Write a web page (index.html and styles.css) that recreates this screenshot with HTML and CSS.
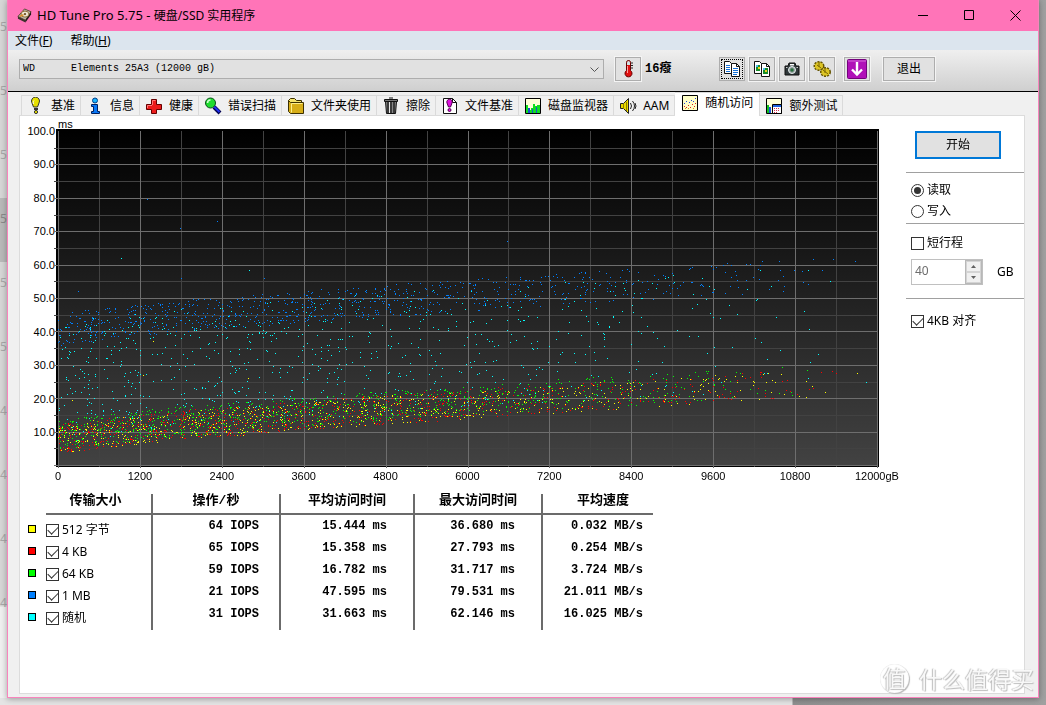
FILE: index.html
```html
<!DOCTYPE html>
<html lang="zh-CN">
<head>
<meta charset="utf-8">
<title>HD Tune Pro 5.75 - 硬盘/SSD 实用程序</title>
<link rel="stylesheet" href="styles.css">
</head>
<body>
<div class="desktop">
  <div class="rail" aria-hidden="true">
    <span>5</span><span>5</span><span>5</span><span class="rail-on">5</span><span>5</span><span>5</span><span>4</span><span>4</span><span>4</span><span>4</span>
  </div>
  <div class="window">
    <header class="titlebar">
      <svg class="app-icon" viewBox="0 0 16 16"><path d="M1 9 8 1l7 3-6 9z" fill="#b9b4a6" stroke="#5a4632"/><path d="M1 9l8 4v2.500L1 11.500z" fill="#3c332b"/><path d="m9 13 6-9v3l-6 8.500z" fill="#1e1a18"/><ellipse cx="8.500" cy="6.500" rx="4.200" ry="3.200" fill="#ece5d2" stroke="#8c6a32"/><circle cx="8.500" cy="6.500" r="1.200" fill="#6b4a20"/><path d="m3 9 4-2" stroke="#d98a20" stroke-width="1.500"/></svg>
      <h1><span class="product">HD Tune Pro 5.75 - </span>硬盘/SSD 实用程序</h1>
      <button class="win-btn" aria-label="最小化"><svg viewBox="0 0 11 11"><path d="M0 5.500h10" stroke="#000"/></svg></button>
      <button class="win-btn" aria-label="最大化"><svg viewBox="0 0 11 11"><path d="M.5.5h9v9h-9z" fill="none" stroke="#000"/></svg></button>
      <button class="win-btn" aria-label="关闭"><svg viewBox="0 0 11 11"><path d="m.5.5 10 10m0-10-10 10" stroke="#000"/></svg></button>
    </header>
    <nav class="menubar">
      <button>文件(<u>F</u>)</button>
      <button>帮助(<u>H</u>)</button>
    </nav>
    <div class="toolbar">
      <div class="drive">
        <select aria-label="驱动器"><option>WD&nbsp;&nbsp;&nbsp;&nbsp;&nbsp;&nbsp;Elements 25A3 (12000 gB)</option></select>
        <svg viewBox="0 0 9 5"><path d="m.5.5 4 4 4-4" fill="none" stroke="#555"/></svg>
      </div>
      <button class="tool temp" aria-label="温度"><svg viewBox="0 0 18 18"><path d="M7.500 2.500a2 2 0 0 1 4 0v8a3.500 3.500 0 1 1-4 0z" fill="#e01010" stroke="#600"/><path d="M8 2.500a1.500 1.500 0 0 1 3 0V5H8z" fill="#cfe3e6"/><path d="M12 3h2M12 5.500h2M12 8h2" stroke="#222"/><path d="M8.500 6v7" stroke="#ff9c9c"/></svg></button>
      <strong class="degrees">16癈</strong>
      <div class="tools">
        <button class="tool focused" aria-label="复制文本"><svg viewBox="0 0 18 18"><path d="M1.500 1.500h5l2 2v10h-7z" fill="#fff" stroke="#111"/><path d="M8.500 3.500h5l3 3v10h-8z" fill="#fff" stroke="#111"/><path d="M13.500 3.500v3h3" fill="none" stroke="#111"/><path d="M3 5.500h4M3 7.500h4M3 9.500h4M3 11.500h4M10 8.500h5M10 10.500h5M10 12.500h5M10 14.500h4" stroke="#1672d8"/></svg></button>
        <button class="tool" aria-label="复制图像"><svg viewBox="0 0 18 18"><path d="M1.500 1.500h5l2 2v10h-7z" fill="#fff" stroke="#111"/><path d="M8.500 3.500h5l3 3v10h-8z" fill="#fff" stroke="#111"/><path d="M13.500 3.500v3h3" fill="none" stroke="#111"/><path d="M3 5h4v6H3z" fill="#168c28"/><path d="M10 8h5v6h-5z" fill="#168c28"/><path d="M3 5h2v2H3zM10 8h2v2h-2z" fill="#48b8f0"/><path d="M5 7h2v2H5zM12 10h2v2h-2z" fill="#f0d020"/></svg></button>
        <button class="tool" aria-label="截图"><svg viewBox="0 0 18 18"><path d="M2 6h3l1-3h6l1 3h3v9H2z" fill="#30383a" stroke="#111"/><path d="M7 4h4v1.500H7z" fill="#fff"/><circle cx="9" cy="10" r="3.500" fill="#8f9c9c" stroke="#e8eeee"/><circle cx="9" cy="10" r="1.700" fill="#28713c"/><path d="M3 7.500h1.500M13.500 7.500H15" stroke="#ccc"/></svg></button>
        <button class="tool" aria-label="选项"><svg viewBox="0 0 18 18"><ellipse cx="6" cy="6" rx="4.500" ry="4" fill="#d8bc18" stroke="#665500" stroke-width="2" stroke-dasharray="2 1"/><ellipse cx="6" cy="6" rx="4" ry="3.600" fill="#dcc424"/><ellipse cx="12.500" cy="12" rx="4.500" ry="4" fill="#d8bc18" stroke="#665500" stroke-width="2" stroke-dasharray="2 1"/><ellipse cx="12.500" cy="12" rx="4" ry="3.600" fill="#dcc424"/><path d="m4 5 4 3M10 10l5 4M6 2v5M12 8v5" stroke="#7c6804"/></svg></button>
        <button class="tool save" aria-label="保存"><svg viewBox="0 0 20 20"><rect x=".5" y=".5" width="19" height="19" rx="1" fill="#b010b8" stroke="#74007c"/><path d="M1 2h18" stroke="#d76bdc"/><path d="M10 3v12M5 10.500l5 5 5-5" fill="none" stroke="#fff" stroke-width="2.400"/></svg></button>
      </div>
      <button class="exit">退出</button>
    </div>
    <main class="body">
      <nav class="tabs" role="tablist">
        <button role="tab"><svg viewBox="0 0 18 18"><path d="M6.500 10 5 6a4 4 0 1 1 7 0l-1.500 4z" fill="#e6e000" stroke="#333"/><path d="M7 11h4v2H7z" fill="#333"/><circle cx="9" cy="15" r="1.600" fill="#e6e000" stroke="#333"/><path d="M7 3.500c-1 1-1 2-.5 3.500" fill="none" stroke="#fff"/></svg>基准</button>
        <button role="tab"><svg viewBox="0 0 18 18"><circle cx="9" cy="3.500" r="2.500" fill="#19b4ff" stroke="#003c88"/><path d="M5.500 7.500h6v7h2v2h-8v-2h2v-5h-2z" fill="#0878f8" stroke="#002060"/></svg>信息</button>
        <button role="tab"><svg viewBox="0 0 18 18"><path d="M6.500 2.500h5v5h5v5h-5v4h-5v-4h-5v-5h5z" fill="#ec1c1c" stroke="#650000"/><path d="M7.500 8V3.500h3M2.500 11V8.500H7" fill="none" stroke="#ff7a7a"/></svg>健康</button>
        <button role="tab"><svg viewBox="0 0 18 18"><path d="m10 10 6 6" stroke="#000050" stroke-width="4"/><path d="m10 9.500 5.500 5.500" stroke="#2030f0" stroke-width="2"/><circle cx="6.500" cy="6" r="5" fill="#20dc30" stroke="#084c18"/><path d="M3.500 6a3 3 0 0 1 3-3" fill="none" stroke="#d0ffd0" stroke-width="1.500"/></svg>错误扫描</button>
        <button role="tab"><svg viewBox="0 0 18 18"><path d="M1.500 14V3.500l2-2h4l2 2h5V6" fill="#f4e46c" stroke="#3c3000"/><path d="M3.500 5.500h13v11h-13l-2-2v-11z" fill="#d7ae18" stroke="#3c3000"/><path d="M4.500 15.500v-9h11" fill="none" stroke="#fff08c"/></svg>文件夹使用</button>
        <button role="tab"><svg viewBox="0 0 18 18"><path d="M3.500 4.500h11l-1 12h-9z" fill="#888" stroke="#111"/><path d="M6 5v11M9 5v11M12 5v11" stroke="#222" stroke-width="1.500"/><path d="M7.500 5v11" stroke="#e8e8e8"/><path d="M2.500 2.500h13v2h-13zM7 1h4" fill="#777" stroke="#111"/></svg>擦除</button>
        <button role="tab"><svg viewBox="0 0 18 18"><path d="M2.500 1.500h9l4 4v11h-13z" fill="#fff" stroke="#111"/><path d="M11.500 1.500v4h4" fill="none" stroke="#111"/><path d="M7.500 10 6 6a2.700 2.700 0 1 1 5 0l-1.500 4z" fill="#e010e0" stroke="#500050"/><circle cx="8.500" cy="13" r="1.500" fill="#e010e0" stroke="#500050"/></svg>文件基准</button>
        <button role="tab"><svg viewBox="0 0 18 18"><path d="M1.500 1.500h15v15h-15z" fill="#ffffd8" stroke="#000"/><path d="M2 8h2v8H2zM7 11h2V7h2v2h2v7H4v-3h3z" fill="#10e020"/><path d="M13 8h3v8h-3z" fill="#10e020"/><path d="M4 11h2v5H4zM8 12h1v4H8zM12 10h1v6h-1z" fill="#1850d0"/></svg>磁盘监视器</button>
        <button role="tab"><svg viewBox="0 0 18 18"><path d="M1.500 6.500h3l5-5v15l-5-5h-3z" fill="#e8d800" stroke="#222"/><path d="M4.500 7v5M7.500 5v9" stroke="#8a7e00"/><path d="M11.500 6q2 3 0 6M13.500 4q4 5 0 10M16 6q2 3 0 6" fill="none" stroke="#222"/></svg>AAM</button>
        <button role="tab" aria-selected="true" class="active"><svg viewBox="0 0 18 18"><path d="M1.500 1.500h15v15h-15z" fill="#ffffc8" stroke="#000"/><path d="M3 12h1v1H3zM5 13h1v1H5zM7 11h1v1H7zM9 13h1v1H9zM11 10h1v1h-1zM13 12h1v1h-1zM14 9h1v1h-1z" fill="#e02020"/><path d="M3 9h1v1H3zM5 7h1v1H5zM8 8h1v1H8zM10 6h1v1h-1zM12 7h1v1h-1zM14 4h1v1h-1z" fill="#2040e0"/><path d="M4 14h1v1H4zM7 14h1v1H7zM12 14h1v1h-1z" fill="#e09010"/></svg>随机访问</button>
        <button role="tab"><svg viewBox="0 0 18 18"><path d="M1.500 1.500h15v15h-15z" fill="#ffffd8" stroke="#000"/><path d="M2 8h2v8H2z" fill="#10c020"/><path d="M4 10h2v6H4z" fill="#1850e0"/><path d="M7.500 7.500h9v9h-9z" fill="#fff" stroke="#000"/><path d="M8 9h8" stroke="#2060e0" stroke-width="2"/><path d="M9 11.500h6M9 13.500h6M9 15.500h4" stroke="#d03050" stroke-dasharray="1 1"/></svg>额外测试</button>
      </nav>
      <section class="panel">
        <div class="results">
          <div class="unit">ms</div>
          <div class="chart">
            <div class="y-axis"><span>100.0</span><span>90.0</span><span>80.0</span><span>70.0</span><span>60.0</span><span>50.0</span><span>40.0</span><span>30.0</span><span>20.0</span><span>10.0</span></div>
            <div class="plot"><canvas id="plot" role="img" aria-label="随机访问时间"></canvas></div>
          </div>
          <div class="x-axis"><span>0</span><span>1200</span><span>2400</span><span>3600</span><span>4800</span><span>6000</span><span>7200</span><span>8400</span><span>9600</span><span>10800</span><span>12000gB</span></div>
          <table class="stats">
            <thead><tr><td class="key"></td><th>传输大小</th><th>操作/秒</th><th>平均访问时间</th><th>最大访问时间</th><th>平均速度</th></tr></thead>
            <tbody>
              <tr><td class="key"><i class="swatch yellow"></i></td><td><label><input type="checkbox" checked>512 字节</label></td><td>64 IOPS</td><td>15.444 ms</td><td>36.680 ms</td><td>0.032 MB/s</td></tr>
              <tr><td class="key"><i class="swatch red"></i></td><td><label><input type="checkbox" checked>4 KB</label></td><td>65 IOPS</td><td>15.358 ms</td><td>27.793 ms</td><td>0.254 MB/s</td></tr>
              <tr><td class="key"><i class="swatch green"></i></td><td><label><input type="checkbox" checked>64 KB</label></td><td>59 IOPS</td><td>16.782 ms</td><td>31.717 ms</td><td>3.724 MB/s</td></tr>
              <tr><td class="key"><i class="swatch blue"></i></td><td><label><input type="checkbox" checked>1 MB</label></td><td>21 IOPS</td><td>47.595 ms</td><td>79.531 ms</td><td>21.011 MB/s</td></tr>
              <tr><td class="key"><i class="swatch cyan"></i></td><td><label><input type="checkbox" checked>随机</label></td><td>31 IOPS</td><td>31.663 ms</td><td>62.146 ms</td><td>16.025 MB/s</td></tr>
            </tbody>
          </table>
        </div>
        <aside class="options">
          <div class="group"><button class="start">开始</button></div>
          <div class="group">
            <label><input type="radio" name="mode" checked>读取</label>
            <label><input type="radio" name="mode">写入</label>
          </div>
          <div class="group stroke">
            <label><input type="checkbox">短行程</label>
            <div class="size">
              <div class="spin">
                <input type="text" id="size" value="40" disabled>
                <div class="arrows">
                  <button disabled aria-label="增加"><svg viewBox="0 0 5 3"><path d="M0 3h5L2.500 0z" fill="#606060"/></svg></button>
                  <button disabled aria-label="减少"><svg viewBox="0 0 5 3"><path d="M0 0h5L2.500 3z" fill="#606060"/></svg></button>
                </div>
              </div>
              <label for="size">GB</label>
            </div>
          </div>
          <div class="group"><label><input type="checkbox" checked>4KB 对齐</label></div>
        </aside>
      </section>
    </main>
  </div>
  <div class="watermark"><span class="seal">值</span><span>什么值得买</span></div>
</div>
<script src="plot.js"></script>
</body>
</html>
```

FILE: styles.css
```css
* { box-sizing: border-box; }

body {
  margin: 0;
  font: 12px/16px "Noto Sans", "Noto Sans CJK SC", sans-serif;
  color: #000;
}

button, input, select { font: inherit; color: inherit; margin: 0; }
button { padding: 0; border: 0; background: none; }
svg { display: block; }

.desktop {
  position: relative;
  display: flex;
  min-height: 100vh;
  padding: 0 7px 7px 0;
  background:
    linear-gradient(90deg, #e4e4e4, #e4e4e4 792px, #909090 793px, #a0a0a0);
}

.rail {
  width: 7px;
  padding-top: 6px;
  overflow: hidden;
  color: #a8a8a8;
  background: linear-gradient(#d6d6d6 606px, #f0f0f0 607px);
}
.rail span { display: block; height: 64px; line-height: 42px; }
.rail .rail-on { background: #b9b9b9; color: #8a8a8a; }

.window {
  flex: 1;
  min-width: 0;
  display: flex;
  flex-direction: column;
  border: 1px solid #f884bc;
  border-top: 0;
  background: #f0f0f0;
  box-shadow: 0 1px 6px #00000055;
}

.titlebar { display: flex; align-items: center; height: 31px; padding-left: 9px; background: #ff74b8; }
.app-icon { width: 15px; height: 15px; }
.titlebar h1 { flex: 1; margin: 0 0 0 5px; font-size: 12px; font-weight: 400; white-space: pre; }
.titlebar .product { font-size: 13px; }
.win-btn { width: 46px; height: 31px; display: grid; place-items: center; }
.win-btn svg { width: 11px; height: 11px; }

.menubar { display: flex; gap: 18px; height: 19px; padding-left: 7px; background: #dce5ee; }

.toolbar {
  display: flex;
  align-items: center;
  height: 42px;
  padding: 0 103px 4px 11px;
  border-bottom: 1px solid #000;
  background: linear-gradient(#efefef, #cfcfcf);
}
.drive { flex: 1; position: relative; }
.drive select {
  display: block;
  width: 100%;
  height: 20px;
  padding: 0 3px;
  appearance: none;
  border: 1px solid #adadad;
  border-radius: 0;
  background: #e1e1e1;
  font: 10px "Liberation Mono", monospace;
}
.drive svg { position: absolute; right: 5px; top: 8px; width: 9px; height: 5px; pointer-events: none; }
.tool, .exit { border: 1px solid #adadad; background: #e1e1e1; outline: 1px solid #f4f4f4; }
.tool { width: 26px; height: 24px; display: grid; place-items: center; }
.tool svg { width: 18px; height: 18px; }
.temp { margin-left: 11px; }
.degrees { width: 78px; padding-left: 4px; font: bold 12px/16px "Liberation Mono", "Noto Sans CJK SC", monospace; }
.tools { display: flex; gap: 4px; }
.tool.focused { outline: 1px dotted #000; outline-offset: -3px; }
.save { margin-left: 5px; }
.save svg { width: 20px; height: 20px; }
.exit { width: 52px; height: 24px; margin-left: 13px; }

.body { flex: 1; display: flex; flex-direction: column; padding: 0 13px 3px 11px; }

.tabs { display: flex; align-items: flex-end; height: 23px; padding-left: 2px; }
.tabs button {
  display: flex;
  align-items: center;
  gap: 6px;
  height: 20px;
  padding: 0 5px;
  border: solid #dadada;
  border-width: 1px 1px 0 0;
  white-space: nowrap;
}
.tabs button:first-child { border-left-width: 1px; }
.tabs svg { width: 18px; height: 18px; }
.tabs .active {
  position: relative;
  height: 24px;
  margin-bottom: -1px;
  padding: 0 6px 4px;
  background: #fff;
}

.panel { flex: 1; display: flex; gap: 27px; border: 1px solid #dcdcdc; background: #fff; }
.results { flex: 1; min-width: 0; }

.unit, .y-axis, .x-axis { font: 11px/12px "Liberation Sans", Arial, sans-serif; }
.unit { height: 13px; padding: 2px 0 0 38px; }
.chart { display: flex; height: 341px; }
.y-axis {
  width: 35px;
  display: flex;
  flex-direction: column;
  justify-content: space-between;
  height: 313px;
  margin: -4px -1px 0 0;
  text-align: right;
}
.plot { flex: 1; min-width: 0; overflow: hidden; }
.plot canvas { display: block; width: 100%; height: 100%; }
.x-axis { display: flex; justify-content: space-between; padding: 0 2px 0 38px; }
.x-axis span { width: 0; display: flex; justify-content: center; white-space: nowrap; }

.stats {
  width: 633px;
  margin-top: 12px;
  table-layout: fixed;
  border-collapse: separate;
  border-spacing: 0;
  font: bold 12px/14px "Liberation Mono", "Noto Sans CJK SC", monospace;
}
.stats th, .stats td { padding: 0; vertical-align: top; }
.stats th { width: 134px; height: 21px; border-bottom: 2px solid #6b6b6b; font-size: 13px; }
.stats th:nth-child(2) { width: 107px; padding-right: 6px; }
.stats th:nth-child(3) { width: 128px; }
.stats th:nth-child(5) { width: 128px; }
.stats th:last-child { width: 110px; padding-left: 10px; }
.stats th:not(:last-child), .stats td:not(:last-child):not(.key) { border-right: 2px solid #6b6b6b; }
.stats .key { width: 26px; }
.stats tbody td { height: 22px; padding: 4px 20px 0 0; text-align: right; white-space: nowrap; }
.stats tbody td:nth-child(4), .stats tbody td:nth-child(5) { padding-right: 26px; }
.stats tbody td:last-child { padding-right: 10px; }
.stats tbody td:nth-child(2) { padding: 8px 0 0; text-align: left; }
.stats label { line-height: 14px; }
.stats tbody .key { padding: 10px 0 0 8px; }
.stats tbody tr:last-child td { height: 27px; }
.swatch { display: block; width: 8px; height: 8px; border: 1px solid #000; }
.yellow { background: #ff0; }
.red { background: #f00; }
.green { background: #0f0; }
.blue { background: #0080ff; }
.cyan { background: #0ff; }

label { display: flex; align-items: center; gap: 3px; font: 12px/16px "Noto Sans", "Noto Sans CJK SC", sans-serif; }

input[type="checkbox"], input[type="radio"] {
  appearance: none;
  display: grid;
  place-items: center;
  width: 13px;
  height: 13px;
  flex: none;
  border: 1px solid #333;
  background: #fff;
}
input[type="radio"] { border-radius: 50%; }
input[type="radio"]:checked::after { content: ""; width: 7px; height: 7px; border-radius: 50%; background: #333; }
input[type="checkbox"]:checked::after {
  content: "";
  width: 9px;
  height: 5px;
  margin-top: -3px;
  border: solid #333;
  border-width: 0 0 1px 1px;
  transform: rotate(-45deg);
}

.options { width: 118px; padding-top: 15px; }
.group { padding: 9px 5px 4px; border-bottom: 1px solid #a0a0a0; }
.group:first-child { padding: 0 9px 13px; }
.group:last-child { padding-top: 14px; border: 0; }
.group > label + label { margin-top: 5px; }
.start { width: 86px; height: 28px; border: 2px solid #0078d7; background: #e1e1e1; }
.stroke { padding: 11px 5px 13px; }
.size { display: flex; align-items: center; gap: 14px; margin-top: 8px; }
.spin { display: flex; width: 72px; height: 26px; border: 1px solid #c0c0c0; }
.spin input { flex: 1; min-width: 0; padding: 0 3px 2px; border: 0; background: #fff; color: #6d6d6d; }
.arrows { display: grid; width: 17px; border: 1px solid #b8b8b8; }
.arrows button { display: grid; place-items: center; border: 1px solid #d4d4d4; background: #f0f0f0; }
.arrows svg { width: 5px; height: 3px; }

.watermark {
  position: absolute;
  right: 12px;
  bottom: 9px;
  display: flex;
  align-items: center;
  gap: 10px;
  color: #f8f8f8;
  font: 23px/36px "Noto Sans CJK SC", sans-serif;
  text-shadow: -1px 0 1px #bcbcbc, 1px 1px 1px #bcbcbc;
  pointer-events: none;
}
.seal {
  width: 29px;
  height: 29px;
  border-radius: 50%;
  box-shadow: 1px 1px 1px #b8b8b8, inset 0 0 1px #ccc;
  line-height: 27px;
  text-align: center;
}
```

FILE: plot.js
```js
const canvas = document.getElementById("plot");
const TOP = 2;
const STEP = 33.4;

function makeRandom(seed) {
  return function () {
    seed = (seed + 0x6d2b79f5) | 0;
    let t = Math.imul(seed ^ (seed >>> 15), 1 | seed);
    t = (t + Math.imul(t ^ (t >>> 7), 61 | t)) ^ t;
    return ((t ^ (t >>> 14)) >>> 0) / 4294967296;
  };
}

const lower = (t) => 3.2 + 18 * Math.pow(t, 0.75);
const upper = (t) => 35.5 + 18 * Math.pow(t, 0.75);

function samples() {
  const rnd = makeRandom(575);
  const list = [];
  const add = (count, color, latency) => {
    for (let i = 0; i < count; i++) {
      const t = 0.96 * (1 - Math.pow(1 - rnd(), 0.55));
      list.push([t, latency(t), color]);
    }
  };
  add(820, "#0080ff", (t) => upper(t) + rnd() * 9.5);
  add(820, "#00ffff", (t) => lower(t) + 3 + rnd() * (upper(t) - lower(t) + 4));
  add(820, "#ffff00", (t) => lower(t) + rnd() * 8.5);
  add(820, "#ff0000", (t) => lower(t) + rnd() * 8.8);
  add(820, "#00ff00", (t) => lower(t) + 1 + rnd() * 9);
  [[0.109, 79.5], [0.149, 71], [0.194, 73], [0.15, 56], [0.251, 56], [0.025, 52], [0.548, 67], [0.859, 61], [0.973, 61]]
    .forEach(([t, ms]) => list.push([t, ms, "#0080ff"]));
  [[0.077, 62], [0.233, 58.5], [0.943, 55], [0.987, 25]].forEach(([t, ms]) => list.push([t, ms, "#00ffff"]));
  [[0.017, 19.5], [0.104, 27], [0.116, 37], [0.232, 26], [0.975, 27.5]].forEach(([t, ms]) => list.push([t, ms, "#ffff00"]));
  return list;
}

const points = samples();

function draw() {
  const w = canvas.clientWidth;
  const h = canvas.clientHeight;
  canvas.width = w;
  canvas.height = h;
  const c = canvas.getContext("2d");
  const left = 4;
  const span = w - 2 - left;
  const bottom = TOP + Math.round(STEP * 10);
  const rect = (color, x, y, rw, rh) => {
    c.fillStyle = color;
    c.fillRect(Math.round(x), Math.round(y), rw, rh);
  };
  rect("#000", 2, 0, w - 2, bottom + 2);
  const shade = c.createLinearGradient(0, TOP, 0, bottom);
  shade.addColorStop(0, "#000");
  shade.addColorStop(1, "#424242");
  rect(shade, left, TOP, span, bottom - TOP);

  for (let i = 1; i < 20; i += 2) {
    rect("#424242", left + (span * i) / 20, TOP, 1, bottom + 2 - TOP);
    rect("#424242", 0, TOP + (STEP * i) / 2, w - 2, 1);
  }
  for (let i = 0; i <= 10; i++) {
    rect("#6e6e6e", left + (span * i) / 10, TOP, 1, bottom + 3 - TOP);
    if (i > 0) rect("#6e6e6e", 0, TOP + STEP * i, w - 2, 1);
  }
  points.forEach(([t, ms, color]) => rect(color, left + span * t, bottom - ms * STEP / 10, 1, 1));
}

new ResizeObserver(draw).observe(canvas);
draw();
```
